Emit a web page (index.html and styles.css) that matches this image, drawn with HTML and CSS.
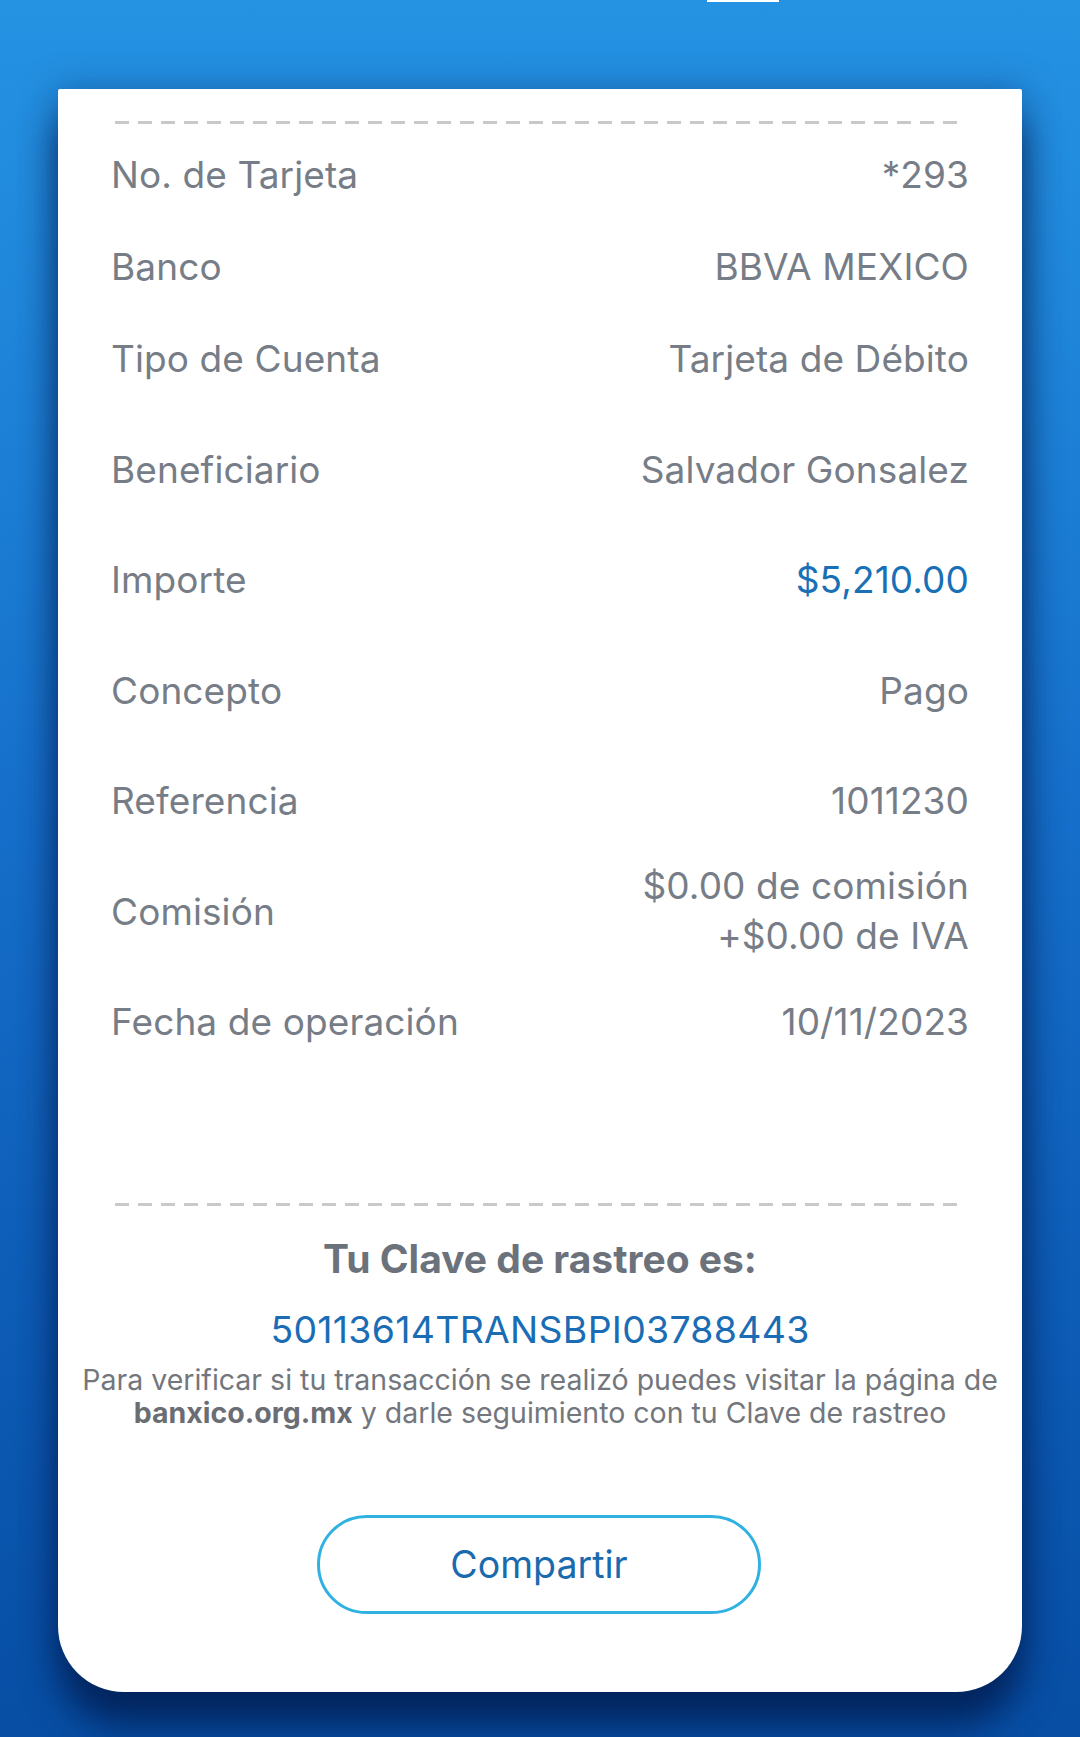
FILE: index.html
```html
<!DOCTYPE html>
<html lang="es">
<head>
<meta charset="utf-8">
<title>Comprobante</title>
<link rel="stylesheet" href="styles.css">
</head>
<body>
<div class="page">
  <header class="topbar">
    <div class="topbar-tab"></div>
  </header>
  <main class="card">
    <div class="dash dash-top"></div>
    <section class="details">
      <div class="group-top">
        <div class="row compact"><span class="label">No. de Tarjeta</span><span class="value">*293</span></div>
        <div class="row compact"><span class="label">Banco</span><span class="value">BBVA MEXICO</span></div>
        <div class="row compact"><span class="label">Tipo de Cuenta</span><span class="value">Tarjeta de Débito</span></div>
      </div>
      <div class="row"><span class="label">Beneficiario</span><span class="value">Salvador Gonsalez</span></div>
      <div class="row"><span class="label">Importe</span><span class="value amount">$5,210.00</span></div>
      <div class="row"><span class="label">Concepto</span><span class="value">Pago</span></div>
      <div class="row"><span class="label">Referencia</span><span class="value">1011230</span></div>
      <div class="row"><span class="label">Comisión</span><span class="value multi">$0.00 de comisión<br>+$0.00 de IVA</span></div>
      <div class="row"><span class="label">Fecha de operación</span><span class="value">10/11/2023</span></div>
    </section>
    <div class="dash dash-bottom"></div>
    <section class="tracking">
      <h2 class="tracking-title">Tu Clave de rastreo es:</h2>
      <p class="tracking-code">50113614TRANSBPI03788443</p>
      <p class="tracking-note">Para verificar si tu transacción se realizó puedes visitar la página de <strong>banxico.org.mx</strong> y darle seguimiento con tu Clave de rastreo</p>
    </section>
    <div class="actions">
      <button class="share-btn" type="button">Compartir</button>
    </div>
  </main>
</div>
</body>
</html>
```

FILE: styles.css
```css
* { box-sizing: border-box; }

html, body {
  margin: 0;
  padding: 0;
}

body {
  width: 1080px;
  height: 1737px;
  overflow: hidden;
  font-family: "Inter", "Roboto", "Liberation Sans", sans-serif;
  background: linear-gradient(180deg, #2592e2 0%, #1f86da 18%, #1670cb 45%, #0d5cb6 75%, #074ea4 100%);
}

.page {
  display: flex;
  flex-direction: column;
  align-items: flex-start;
}

.topbar {
  height: 89px;
  width: 100%;
  display: flex;
}

.topbar-tab {
  margin-left: 707px;
  width: 72px;
  height: 2px;
  background: #ffffff;
}

.card {
  margin-left: 58px;
  width: 964px;
  height: 1603px;
  background: #ffffff;
  border-radius: 2px 2px 66px 66px;
  box-shadow: 0 34px 36px rgba(0, 24, 70, 0.72), 0 0 36px rgba(0, 30, 90, 0.35);
  padding: 32px 53px 0 53px;
  display: flex;
  flex-direction: column;
}

.dash {
  height: 3px;
  width: 844px;
  margin-left: 4px;
  background: repeating-linear-gradient(90deg, #c9c9c9 0 14px, transparent 14px 23px);
}

.details {
  margin-top: 4px;
  display: flex;
  flex-direction: column;
}

.group-top {
  display: flex;
  flex-direction: column;
  margin-bottom: 10px;
}

.row {
  height: 110.5px;
  display: flex;
  align-items: center;
  justify-content: space-between;
  font-size: 37px;
  color: #767d87;
  letter-spacing: 0.1px;
}

.row.compact {
  height: 92px;
}

.value {
  text-align: right;
}

.value.multi {
  line-height: 50px;
}

.value.amount {
  color: #1870b6;
}

.dash-bottom {
  margin-top: 126px;
}

.tracking {
  display: flex;
  flex-direction: column;
  align-items: center;
  text-align: center;
}

.tracking-title {
  margin: 31px 0 0 0;
  font-size: 39px;
  line-height: 44px;
  font-weight: 700;
  color: #6c727c;
}

.tracking-code {
  margin: 27px 0 0 0;
  font-size: 37.4px;
  line-height: 44px;
  color: #1a6db4;
  letter-spacing: 0.3px;
}

.tracking-note {
  margin: 11px -60px 0 -60px;
  font-size: 28.5px;
  line-height: 33px;
  color: #73777d;
}

.tracking-note strong {
  font-weight: 700;
  color: #6a6e74;
}

.actions {
  display: flex;
  justify-content: center;
  margin-top: 86px;
}

.share-btn {
  width: 444px;
  height: 99px;
  border: 3px solid #2fb2e2;
  border-radius: 50px;
  background: #ffffff;
  font-family: inherit;
  font-size: 37.5px;
  color: #1a6aae;
  padding: 0;
  margin-left: -2px;
}
```
